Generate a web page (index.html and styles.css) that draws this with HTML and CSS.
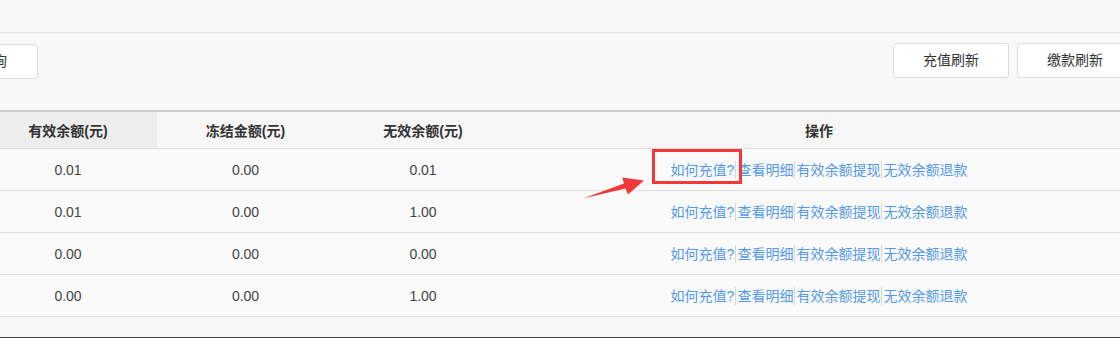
FILE: index.html
```html
<!DOCTYPE html>
<html lang="zh-CN">
<head>
<meta charset="utf-8">
<title>账户余额</title>
<link rel="stylesheet" href="styles.css">
</head>
<body>
<div class="page">
  <div class="topbar"></div>
  <div class="toolbar">
    <button class="btn btn-query">查询</button>
    <div class="btn-group">
      <button class="btn btn-wide">充值刷新</button>
      <button class="btn btn-wide">缴款刷新</button>
    </div>
  </div>
  <div class="grid">
    <div class="row head">
      <div class="cell c1 sorted">有效余额(元)</div>
      <div class="cell c2">冻结金额(元)</div>
      <div class="cell c3">无效余额(元)</div>
      <div class="cell c4">操作</div>
    </div>
    <div class="row">
      <div class="cell c1">0.01</div>
      <div class="cell c2">0.00</div>
      <div class="cell c3">0.01</div>
      <div class="cell c4 ops"><a>如何充值?</a><a class="sep">查看明细</a><a class="sep">有效余额提现</a><a class="sep">无效余额退款</a></div>
    </div>
    <div class="row">
      <div class="cell c1">0.01</div>
      <div class="cell c2">0.00</div>
      <div class="cell c3">1.00</div>
      <div class="cell c4 ops"><a>如何充值?</a><a class="sep">查看明细</a><a class="sep">有效余额提现</a><a class="sep">无效余额退款</a></div>
    </div>
    <div class="row">
      <div class="cell c1">0.00</div>
      <div class="cell c2">0.00</div>
      <div class="cell c3">0.00</div>
      <div class="cell c4 ops"><a>如何充值?</a><a class="sep">查看明细</a><a class="sep">有效余额提现</a><a class="sep">无效余额退款</a></div>
    </div>
    <div class="row">
      <div class="cell c1">0.00</div>
      <div class="cell c2">0.00</div>
      <div class="cell c3">1.00</div>
      <div class="cell c4 ops"><a>如何充值?</a><a class="sep">查看明细</a><a class="sep">有效余额提现</a><a class="sep">无效余额退款</a></div>
    </div>
  </div>
  <div class="footer"></div>

  <div class="mark-box"></div>
  <svg class="mark-arrow" width="1120" height="338" viewBox="0 0 1120 338">
    <polygon points="583,198.5 625.5,188.6 628,194.5 644,180.4 622.2,177.6 624,183.6" fill="#f03a3a"/>
  </svg>
</div>
</body>
</html>
```

FILE: styles.css
```css
html, body {
  margin: 0;
  padding: 0;
  overflow: hidden;
}
body {
  background: #f8f8f8;
  font-family: "Liberation Sans", "Noto Sans CJK SC", sans-serif;
  font-size: 14px;
  color: #333;
}
.page {
  position: relative;
  width: 1120px;
  height: 338px;
  overflow: hidden;
}
.topbar {
  height: 32px;
  border-bottom: 1px solid #e0e0e0;
}
.toolbar {
  height: 77px;
  box-sizing: border-box;
  padding-top: 11px;
  display: flex;
  justify-content: space-between;
  align-items: flex-start;
}
.btn {
  box-sizing: border-box;
  height: 35px;
  background: #fff;
  border: 1px solid #dcdcdc;
  border-radius: 3px;
  font-family: "Liberation Sans", "Noto Sans CJK SC", sans-serif;
  font-size: 14px;
  color: #333;
  padding: 0;
  line-height: 33px;
}
.btn-query {
  width: 90px;
  margin-left: -52px;
}
.btn-group {
  display: flex;
  gap: 8px;
  margin-right: -13px;
  margin-top: -1px;
}
.btn-wide {
  width: 116px;
}
.grid {
  margin-left: -21px;
  width: 1147px;
}
.row {
  display: flex;
  height: 42px;
  box-sizing: border-box;
  border-bottom: 1px solid #dddddd;
  background: #fafafa;
}
.row.head {
  height: 39px;
  border-top: 2px solid #cccccc;
  background: #f6f6f6;
  font-weight: bold;
  color: #333;
}
.cell {
  display: flex;
  align-items: center;
  justify-content: center;
  color: #444;
}
.head .cell {
  color: #333;
}
.c1 { width: 178px; }
.c2 { width: 177px; }
.c3 { width: 178px; }
.c4 { width: 614px; }
.sorted {
  background: #ededed;
}
.ops a {
  color: #5599ea;
  line-height: 18px;
  cursor: pointer;
}
.ops a.sep {
  border-left: 1px solid #d9d9d9;
  padding-left: 1px;
  margin-left: 1px;
}
.footer {
  height: 20px;
  border-bottom: 2px solid #444;
}
.mark-box {
  position: absolute;
  left: 652px;
  top: 149px;
  width: 90px;
  height: 35px;
  box-sizing: border-box;
  border: 3px solid #f03a3a;
}
.mark-arrow {
  position: absolute;
  left: 0;
  top: 0;
}
```
